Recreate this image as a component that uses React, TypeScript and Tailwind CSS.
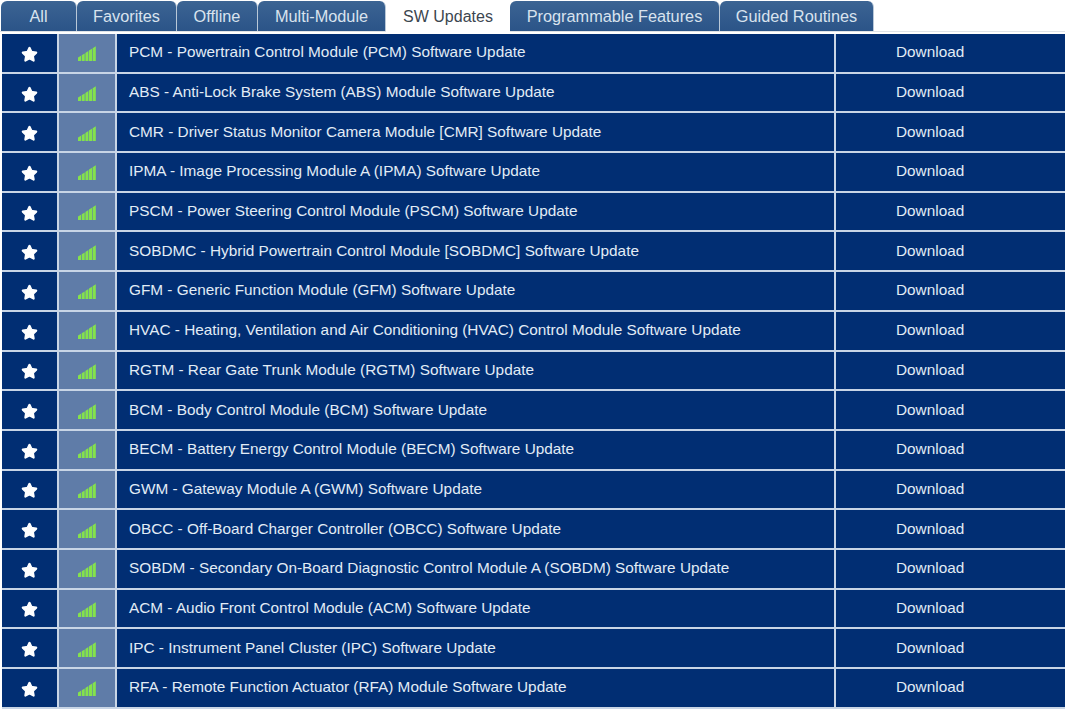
import { Star } from "lucide-react";

const TABS: { label: string; width: string; active?: boolean }[] = [
  { label: "All", width: "w-[76px]" },
  { label: "Favorites", width: "w-[100px]" },
  { label: "Offline", width: "w-[81px]" },
  { label: "Multi-Module", width: "w-[128px]" },
  { label: "SW Updates", width: "w-[124px]", active: true },
  { label: "Programmable Features", width: "w-[210px]" },
  { label: "Guided Routines", width: "w-[154px]" },
];

const ROWS: string[] = [
  "PCM - Powertrain Control Module (PCM) Software Update",
  "ABS - Anti-Lock Brake System (ABS) Module Software Update",
  "CMR - Driver Status Monitor Camera Module [CMR] Software Update",
  "IPMA - Image Processing Module A (IPMA) Software Update",
  "PSCM - Power Steering Control Module (PSCM) Software Update",
  "SOBDMC - Hybrid Powertrain Control Module [SOBDMC] Software Update",
  "GFM - Generic Function Module (GFM) Software Update",
  "HVAC - Heating, Ventilation and Air Conditioning (HVAC) Control Module Software Update",
  "RGTM - Rear Gate Trunk Module (RGTM) Software Update",
  "BCM - Body Control Module (BCM) Software Update",
  "BECM - Battery Energy Control Module (BECM) Software Update",
  "GWM - Gateway Module A (GWM) Software Update",
  "OBCC - Off-Board Charger Controller (OBCC) Software Update",
  "SOBDM - Secondary On-Board Diagnostic Control Module A (SOBDM) Software Update",
  "ACM - Audio Front Control Module (ACM) Software Update",
  "IPC - Instrument Panel Cluster (IPC) Software Update",
  "RFA - Remote Function Actuator (RFA) Module Software Update",
];

const SignalBars = () => (
  <svg width="18" height="15" viewBox="0 0 18 15">
    <polygon points="0,11.5 3,9.8 3,15 0,15" fill="#84e24c" />
    <polygon points="3.7,9.2 6.7,7.5 6.7,15 3.7,15" fill="#84e24c" />
    <polygon points="7.4,6.9 10.4,5.1 10.4,15 7.4,15" fill="#84e24c" />
    <polygon points="11,4.5 14,2.8 14,15 11,15" fill="#84e24c" />
    <polygon points="14.6,2.2 17.8,0.3 17.8,15 14.6,15" fill="#84e24c" />
  </svg>
);

const App = () => {
  return (
    <div className="h-[709px] w-[1065px] overflow-hidden bg-white font-['Liberation_Sans',Arial,sans-serif]">
      <div className="flex h-[32px] border-b border-[#dfe3e8] pl-px pt-px">
        {TABS.map((tab) => (
          <div
            key={tab.label}
            className={
              tab.active
                ? `${tab.width} flex h-[31px] items-center justify-center rounded-t-[5px] bg-white text-[16px] text-[#3c4650]`
                : `${tab.width} flex h-[30px] items-center justify-center rounded-t-[6px] border-r border-[#b9c8d8] bg-gradient-to-b from-[#3c6493] to-[#2b5488] text-[16.3px] text-[#d9e3ee]`
            }
          >
            {tab.label}
          </div>
        ))}
      </div>
      <div className="pl-[2px] pt-[2px]">
        {ROWS.map((row) => (
          <div
            key={row}
            className="flex h-[39.7px] border-b-2 border-[#c8d5e6] text-[15.35px] text-[#e2ecf6]"
          >
            <div className="flex w-[55px] items-center justify-center bg-[#012e73] pt-[3px]">
              <Star size={17} fill="#ffffff" stroke="#ffffff" strokeWidth={2} />
            </div>
            <div className="flex w-[60px] items-center justify-center border-x-2 border-[#c8d5e6] bg-[#5f7ca8] pt-[2px]">
              <SignalBars />
            </div>
            <div className="flex w-[717px] items-center bg-[#012e73] pb-[2px] pl-[12px]">
              {row}
            </div>
            <div className="flex w-[231px] items-center border-l-2 border-[#c8d5e6] bg-[#012e73] pb-[2px] pl-[60px]">
              Download
            </div>
          </div>
        ))}
      </div>
    </div>
  );
};

export default App;
